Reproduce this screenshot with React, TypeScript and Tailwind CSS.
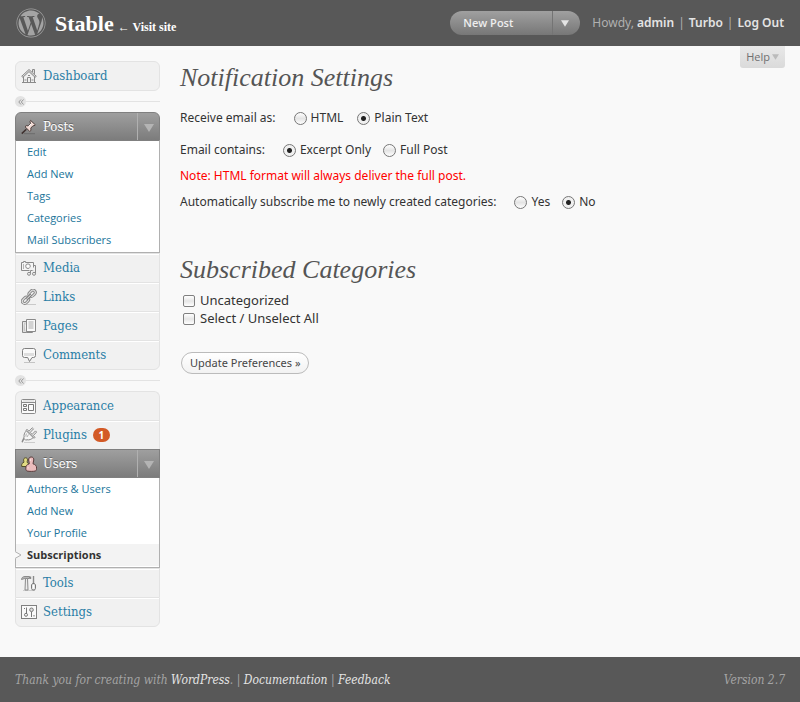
import type { ReactNode } from "react";
import { FaWordpress } from "react-icons/fa";
import { clsx } from "clsx";

type SubItem = { label: string; current?: boolean };

type MenuItem = {
  label: string;
  icon: ReactNode;
  badge?: number;
  children?: SubItem[];
};

function Icon({ children }: { children: ReactNode }) {
  return (
    <svg
      viewBox="0 0 16 16"
      className="h-4 w-4 shrink-0"
      fill="none"
      stroke="#8a8a8a"
      strokeWidth="1"
      aria-hidden="true"
    >
      {children}
    </svg>
  );
}

const icons = {
  dashboard: (
    <Icon>
      <path d="M2.5 8v6.5h11V8L8 3z" fill="#f0f0f0" />
      <path d="M.7 8.3 8 1.5l7.3 6.8-1.2 1L8 3.6 1.9 9.3z" fill="#e0e0e0" />
      <path d="M11.5 4V1.5h2v4.4" fill="#ddd" />
      <path d="M6.5 14V9.5h3V14M3.5 12h2M10.5 12h2M7 7.5h2" />
      <path d="M1 14.5h14" />
    </Icon>
  ),
  posts: (
    <Icon>
      <path d="M3 14.7h11" stroke="#6c6c6c" />
      <path d="M5.3 10.2 .8 14.6" stroke="#3e302e" strokeWidth="1.5" />
      <path
        d="m9.6 1.4 4.7 4.4-1.3 1.1-1-.2-2.2 2.4.2 2.3-1.2 1-4.8-4.6 1.2-1.1 2.3.2 2-2.3-.5-1.9z"
        fill="#f3dcd6"
        stroke="#4e3f3d"
      />
      <path d="m7.6 7.6 2.400-2.600" stroke="#fff" />
    </Icon>
  ),
  media: (
    <Icon>
      <path d="M.5 2.5h2v-1h2v1h8v8H.5z" fill="#f6f6f6" />
      <path d="M2.5 4v5" stroke="#b5b5b5" />
      <circle cx="7" cy="6.2" r="2.3" fill="#fff" />
      <path d="M10 14V9h4v5" stroke="#f1f1f1" strokeWidth="3" />
      <path d="M9.5 13.500V10.500h2M14.5 13.500V5.500h-2" />
      <circle cx="8" cy="13.800" r="1.500" fill="#eee" />
      <circle cx="13" cy="13.800" r="1.500" fill="#eee" />
    </Icon>
  ),
  links: (
    <Icon>
      <path d="M3 15.5h12" stroke="#c9c9c9" />
      <rect x="7.6" y="2" width="7" height="4.6" rx="2.3" transform="rotate(-45 11.1 4.3)" strokeWidth="3" />
      <rect x="1" y="9" width="7" height="4.6" rx="2.3" transform="rotate(-45 4.5 11.3)" strokeWidth="3" />
      <rect x="7.6" y="2" width="7" height="4.6" rx="2.3" transform="rotate(-45 11.1 4.3)" stroke="#e6e6e6" />
      <rect x="1" y="9" width="7" height="4.6" rx="2.3" transform="rotate(-45 4.5 11.3)" stroke="#e6e6e6" />
      <path d="m5.5 10.2 4.6-4.6" stroke="#808080" strokeWidth="3" />
      <path d="m5.8 9.9 4-4" stroke="#eee" />
    </Icon>
  ),
  pages: (
    <Icon>
      <path d="M1.5 3.5h4v11h6v-1M1.5 3.5v11h4" fill="#ddd" />
      <path d="M5.5 1.5h9v12h-9z" fill="#fafafa" />
      <path d="M7.5 4h5M7.5 6h5M7.5 8h5M7.5 10h5M3 6h1M3 8h1M3 10h1M3 12h1" stroke="#aaa" />
    </Icon>
  ),
  comments: (
    <Icon>
      <path d="M3 15.5h11" stroke="#c4c4c4" />
      <path
        d="M3.5 1.5h9a2 2 0 0 1 2 2v5a2 2 0 0 1-2 2H11l-2.5 4-1.8-4H3.5a2 2 0 0 1-2-2v-5a2 2 0 0 1 2-2z"
        fill="#fafafa"
        stroke="#808080"
      />
      <path d="M3 6h10v3H3z" fill="#dedede" stroke="none" />
    </Icon>
  ),
  appearance: (
    <Icon>
      <rect x=".5" y="1.5" width="14" height="14" rx="1" fill="#fafafa" />
      <path d="M.5 4.5h14" />
      <path d="M2 3h11" stroke="#d5d5d5" />
      <path d="M2.5 6.5h3v2h-3zM2.5 10.5h3v2h-3zM7.5 6.5h5v6h-5z" stroke="#777" />
    </Icon>
  ),
  plugins: (
    <Icon>
      <path d="M3 15.500h11" stroke="#ccc" />
      <path d="M.8 15c1.400-.6.6-2.700 2.800-4" strokeWidth="1.600" />
      <path
        d="M5.500 3.800c-2.100 1.900-2.900 4.300-2.300 6.300l-.7.900 2.300 2.300 1-.6c2.100.7 4.700-.3 6.500-2.300z"
        fill="#f6f6f6"
      />
      <path d="m5 3.300 1-1 8 8-1 1z" fill="#e2e2e2" />
      <path d="M8 4.200 11.300.8l1.200 1.100-3.300 3.500M11.200 7.300l3.300-3.400 1.100 1.200-3.200 3.400" fill="#f2f2f2" />
      <path d="M5.600 6.500c-.7 1.100-.8 2-.7 3M7.500 7.500 6 10" stroke="#b0b0b0" />
    </Icon>
  ),
  users: (
    <Icon>
      <path
        d="M4.600 1.800c1.300 0 2 1 1.900 2.300-.1 1-.5 1.600-.5 2.200 1.300.7 2 1.500 2 4.200H.7c-.3-3 .7-3.500 2.300-4.300 0-.6-.4-1.100-.4-2.100 0-1.300.7-2.300 2-2.300z"
        fill="#e2dc83"
        stroke="#55502c"
      />
      <path
        d="M10.200 1c1.800 0 2.700 1.300 2.600 3-.1 1.600-.9 2.600-.8 3.800 2.300.8 3.600 1.800 3.600 4.400 0 1.700-.5 2.600-1.300 2.800-2 .5-6 .5-8.200 0-.9-.3-1.300-1.100-1.300-2.800 0-2.600 1.200-3.600 3.500-4.400.1-1.200-.6-2.200-.7-3.800 0-1.700.8-3 2.600-3z"
        fill="#ebbcbc"
        stroke="#573a3a"
      />
      <path d="M9.500 3v2M7 11v1.500" stroke="#f8dede" />
    </Icon>
  ),
  tools: (
    <Icon>
      <path d="M2 15.500h12" stroke="#ccc" />
      <path d="M.5 4.500c.2-2 1.500-3 3.500-3h4.500v2H4.300C2.500 3.500 2 4.500.5 4.500z" fill="#b5b5b5" />
      <path d="M4.500 3.500h2l.5 11.500H4z" fill="#ececec" />
      <path d="M9.500 1.500V4M12.500 1v7" strokeWidth="1.400" />
      <path d="M11.500 8.500h2l1 1.500v3.500l-1 1.500h-2l-1-1.500V10z" fill="#e6e6e6" stroke="#777" />
      <path d="M12.500 10v3.500" stroke="#fff" />
    </Icon>
  ),
  settings: (
    <Icon>
      <rect x=".5" y="1.500" width="15" height="13" fill="#fafafa" stroke="#808080" />
      <path d="M5.500 3.500v6M10.500 7.500V13M3.500 4v1M13 11v1.500" stroke="#777" />
      <circle cx="5" cy="10.800" r="1.500" stroke="#777" />
      <circle cx="10.500" cy="5.800" r="1.800" fill="#ddd" stroke="#777" />
    </Icon>
  ),
};

const menuGroups: MenuItem[][] = [
  [{ label: "Dashboard", icon: icons.dashboard }],
  [
    {
      label: "Posts",
      icon: icons.posts,
      children: [
        { label: "Edit" },
        { label: "Add New" },
        { label: "Tags" },
        { label: "Categories" },
        { label: "Mail Subscribers" },
      ],
    },
    { label: "Media", icon: icons.media },
    { label: "Links", icon: icons.links },
    { label: "Pages", icon: icons.pages },
    { label: "Comments", icon: icons.comments },
  ],
  [
    { label: "Appearance", icon: icons.appearance },
    { label: "Plugins", icon: icons.plugins, badge: 1 },
    {
      label: "Users",
      icon: icons.users,
      children: [
        { label: "Authors & Users" },
        { label: "Add New" },
        { label: "Your Profile" },
        { label: "Subscriptions", current: true },
      ],
    },
    { label: "Tools", icon: icons.tools },
    { label: "Settings", icon: icons.settings },
  ],
];

function Triangle({ className }: { className: string }) {
  return (
    <svg viewBox="0 0 10 8" className={className} fill="currentColor" aria-hidden="true">
      <path d="M0 0h10L5 8z" />
    </svg>
  );
}

function OpenMenu({ item, first }: { item: MenuItem; first: boolean }) {
  return (
    <li>
      <div
        className={clsx(
          "flex h-[29px] border border-[#808080] bg-linear-to-b from-[#9f9f9f] to-[#7c7c7c]",
          first && "rounded-t-md"
        )}
      >
        <a
          href="#"
          className="flex flex-1 items-center gap-1.5 pl-[5px] font-['DejaVu_Serif_Condensed','DejaVu_Serif',serif] text-[13px] text-white [text-shadow:0_-1px_0_#666]"
        >
          {item.icon}
          {item.label}
        </a>
        <button
          type="button"
          aria-label={`Toggle ${item.label}`}
          className="flex w-[22px] items-center justify-center border-l border-[#b0b0b0] pt-0.5 text-[#b4b4b4]"
        >
          <Triangle className="h-2 w-2.5" />
        </button>
      </div>
      <ul className="border-x border-b border-[#b0b0b0] bg-white pb-px">
        {item.children?.map((child) => (
          <li key={child.label} className={clsx("relative", child.current && "bg-[#f3f3f3]")}>
            {child.current && (
              <svg viewBox="0 0 7 8" className="absolute top-[7px] -left-px h-2 w-[7px]" aria-hidden="true">
                <path d="M0 0 6 4 0 8z" fill="#f9f9f9" />
                <path d="M0 .5 6 4 0 7.500" fill="none" stroke="#b0b0b0" />
              </svg>
            )}
            <a
              href="#"
              aria-current={child.current ? "page" : undefined}
              className={clsx(
                "block pl-[11px] text-[11px] leading-[22px]",
                child.current ? "font-bold text-[#333]" : "text-[#21759b]"
              )}
            >
              {child.label}
            </a>
          </li>
        ))}
      </ul>
    </li>
  );
}

function MenuLink({ item, first, last }: { item: MenuItem; first: boolean; last: boolean }) {
  return (
    <li
      className={clsx(
        "border-x border-t border-[#e3e3e3] bg-[#f1f1f1]",
        first ? "rounded-t-md" : "shadow-[inset_0_1px_0_#fff]",
        last && "rounded-b-md border-b"
      )}
    >
      <a
        href="#"
        className="flex h-7 items-center gap-1.5 pl-[5px] font-['DejaVu_Serif_Condensed','DejaVu_Serif',serif] text-[13px] text-[#2a7ea6]"
      >
        {item.icon}
        {item.label}
        {item.badge && (
          <span className="flex h-3.5 w-[17px] items-center justify-center rounded-full bg-[#d35a26] font-['Open_Sans',sans-serif] text-[10px] font-bold text-white">
            {item.badge}
          </span>
        )}
      </a>
    </li>
  );
}

function Separator() {
  return (
    <div className="flex h-[21px] items-center">
      <button
        type="button"
        aria-label="Collapse menu"
        className="flex h-[11px] w-[11px] items-center justify-center rounded-full bg-[#e3e3e3]"
      >
        <svg viewBox="0 0 6 6" className="h-1.5 w-1.5" fill="none" stroke="#999" aria-hidden="true">
          <path d="M3 .5.8 3 3 5.500M5.500.5 3.300 3l2.200 2.500" />
        </svg>
      </button>
      <span className="h-px flex-1 bg-[#e3e3e3]" />
    </div>
  );
}

function Radio({ name, label, checked }: { name: string; label: string; checked?: boolean }) {
  return (
    <label className="flex items-center gap-1">
      <input
        type="radio"
        name={name}
        defaultChecked={checked}
        className="h-[13px] w-[13px] appearance-none rounded-full border border-[#777] bg-linear-to-b from-white via-[#e4e4e4] to-white checked:bg-[radial-gradient(circle,#222_0_2px,#f0f0f0_3px)]"
      />
      {label}
    </label>
  );
}

function Checkbox({ label }: { label: string }) {
  return (
    <label className="flex h-[18px] items-center gap-[5px]">
      <input
        type="checkbox"
        className="h-3 w-3 appearance-none rounded-xs border border-[#808080] bg-linear-to-b from-white via-[#e6e6e6] to-white checked:bg-[#777]"
      />
      {label}
    </label>
  );
}

export default function App() {
  return (
    <div className="flex min-h-screen flex-col bg-[#f9f9f9] font-['Open_Sans',sans-serif] text-[#333]">
      <header className="flex h-[46px] items-center bg-[#585858] px-4">
        <FaWordpress className="h-[30px] w-[30px] text-[#a4a4a4]" aria-hidden="true" />
        <h1 className="ml-[9px] flex items-baseline gap-1 font-['Liberation_Serif',serif] font-bold text-white">
          <a href="#" className="text-[22px]">
            Stable
          </a>
          <a href="#" className="text-xs">
            ← Visit site
          </a>
        </h1>

        <div className="ml-auto flex h-6 w-[130px] overflow-hidden rounded-full bg-linear-to-b from-[#a0a0a0] to-[#777] text-[11px] font-semibold text-[#eee]">
          <a href="#" className="flex flex-1 items-center pl-[13px]">
            New Post
          </a>
          <button
            type="button"
            aria-label="More actions"
            className="flex w-7 items-center border-l border-[#747474] pl-2 text-[#e4e4e4]"
          >
            <Triangle className="h-[7px] w-2" />
          </button>
        </div>
        <p className="ml-3 flex gap-1 font-['Noto_Sans',sans-serif] text-xs text-[#b0b0b0]">
          <span>
            Howdy,{" "}
            <a href="#" className="font-semibold text-[#e4e4e4]">
              admin
            </a>
          </span>
          |
          <a href="#" className="font-semibold text-[#e4e4e4]">
            Turbo
          </a>
          |
          <a href="#" className="font-semibold text-[#e4e4e4]">
            Log Out
          </a>
        </p>
      </header>

      <div className="flex flex-1 items-start gap-5 px-[15px] pb-[30px]">
        <nav className="w-[145px] shrink-0 pt-[15px]">
          {menuGroups.map((group, idx) => (
            <div key={idx}>
              {idx > 0 && <Separator />}
              <ul>
                {group.map((item, i) =>
                  item.children ? (
                    <OpenMenu key={item.label} item={item} first={i === 0} />
                  ) : (
                    <MenuLink
                      key={item.label}
                      item={item}
                      first={i === 0}
                      last={i === group.length - 1}
                    />
                  )
                )}
              </ul>
            </div>
          ))}
        </nav>

        {/* Settings form */}
        <main className="flex-1 pt-4">
          <h2 className="font-['Liberation_Serif',serif] text-[26px] leading-8 text-[#555] italic">
            Notification Settings
          </h2>
          <form className="font-['Noto_Sans',sans-serif] text-xs">
            <div className="mt-4 flex h-4 items-center">
              <span className="mr-[18px]">Receive email as:</span>
              <div className="flex gap-3.5">
                <Radio name="format" label="HTML" />
                <Radio name="format" label="Plain Text" checked />
              </div>
            </div>
            <div className="mt-4 flex h-4 items-center">
              <span className="mr-[18px]">Email contains:</span>
              <div className="flex gap-3">
                <Radio name="content" label="Excerpt Only" checked />
                <Radio name="content" label="Full Post" />
              </div>
            </div>
            <p className="mt-2.5 leading-4 text-[#f00]">
              Note: HTML format will always deliver the full post.
            </p>
            <div className="mt-2.5 flex h-4 items-center">
              <span className="mr-[18px]">Automatically subscribe me to newly created categories:</span>
              <div className="flex gap-3">
                <Radio name="auto" label="Yes" />
                <Radio name="auto" label="No" checked />
              </div>
            </div>

            <h2 className="mt-11 font-['Liberation_Serif',serif] text-[26px] leading-8 text-[#555] italic">
              Subscribed Categories
            </h2>
            <div className="mt-1.5 pl-[3px] text-[13px]">
              <Checkbox label="Uncategorized" />
              <Checkbox label="Select / Unselect All" />
            </div>
            <button
              type="button"
              className="mt-6 ml-px h-[22px] rounded-full border border-[#bbb] bg-linear-to-b from-white to-[#f2f2f2] px-2 text-[11px] text-[#464646]"
            >
              Update Preferences »
            </button>
          </form>
        </main>

        <button
          type="button"
          className="-ml-5 flex h-[22px] items-center gap-0.5 rounded-b-[3px] bg-linear-to-b from-[#e9e9e9] to-[#dadada] px-1.5 text-[11px] text-[#707070]"
        >
          Help
          <Triangle className="h-1.5 w-[7px] text-[#bbb]" />
        </button>
      </div>

      <footer className="flex h-[45px] items-center justify-between bg-[#585858] px-[15px] font-['DejaVu_Serif_Condensed','DejaVu_Serif',serif] text-xs text-[#a4a4a4] italic">
        <p>
          Thank you for creating with{" "}
          <a href="#" className="text-[#e4e4e4]">
            WordPress
          </a>
          . |{" "}
          <a href="#" className="text-[#e4e4e4]">
            Documentation
          </a>{" "}
          |{" "}
          <a href="#" className="text-[#e4e4e4]">
            Feedback
          </a>
        </p>
        <p>Version 2.7</p>
      </footer>
    </div>
  );
}
